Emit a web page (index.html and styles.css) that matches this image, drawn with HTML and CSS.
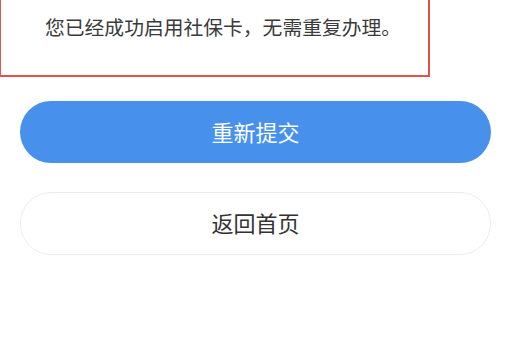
FILE: index.html
```html
<!DOCTYPE html>
<html lang="zh-CN">
<head>
<meta charset="utf-8">
<link rel="stylesheet" href="styles.css">
</head>
<body>
<div class="notice">
  <p class="msg">您已经成功启用社保卡，无需重复办理。</p>
</div>
<div class="actions">
  <button class="btn btn-primary">重新提交</button>
  <button class="btn btn-secondary">返回首页</button>
</div>
</body>
</html>
```

FILE: styles.css
```css
html, body {
  margin: 0;
  padding: 0;
  background: #ffffff;
  font-family: "Noto Sans CJK SC", "Noto Sans", sans-serif;
}
.notice {
  box-sizing: border-box;
  width: 430px;
  height: 77px;
  border: 2px solid #e0544c;
  border-top: none;
  border-left-width: 1.5px;
  padding: 16px 0 0 44px;
}
.msg {
  margin: 0;
  font-size: 19.8px;
  line-height: 22px;
  color: #3a3a3a;
  white-space: nowrap;
}
.actions {
  display: flex;
  flex-direction: column;
  gap: 29px;
  padding: 24px 21px 0 20px;
}
.btn {
  box-sizing: border-box;
  height: 62px;
  border-radius: 31px;
  font-family: "Noto Sans CJK SC", sans-serif;
  font-size: 22px;
  display: flex;
  align-items: center;
  justify-content: center;
  padding: 0 0 2px;
  cursor: pointer;
}
.btn-primary {
  background: #4790ec;
  color: #ffffff;
  border: none;
}
.btn-secondary {
  background: #ffffff;
  color: #333333;
  border: 1.5px solid #ececec;
  height: 63px;
  padding-bottom: 4px;
}
```
